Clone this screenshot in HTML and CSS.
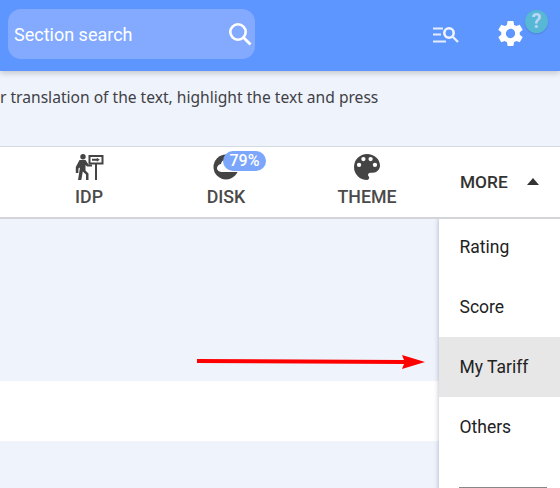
FILE: index.html
```html
<!DOCTYPE html>
<html lang="en">
<head>
<meta charset="utf-8">
<title>Settings</title>
<link rel="stylesheet" href="styles.css">
</head>
<body>
<header class="header">
  <div class="search">
    <span class="search-label">Section search</span>
    <svg class="search-icon" viewBox="0 0 24 24" width="24" height="24"><circle cx="10" cy="10" r="7.700" fill="none" stroke="#fff" stroke-width="2.600"/><path stroke="#fff" stroke-width="2.800" d="M15.500 15.500l7 7"/></svg>
  </div>
  <div class="header-actions">
    <svg class="list-search" viewBox="0 0 27 18" width="27" height="18"><path fill="none" stroke="#e4edff" stroke-width="2" d="M1 1.500h10M1 7.500h8M1 14.500h13"/><circle cx="17" cy="6" r="4.700" fill="none" stroke="#f0f5ff" stroke-width="2.600"/><path stroke="#e6eeff" stroke-width="2.400" d="M20.500 9.500l5.500 5.500"/></svg>
    <svg class="gear" viewBox="0 0 24 24" width="31" height="31"><path fill="#fff" d="M19.140 12.940c.04-.3.060-.61.060-.94 0-.32-.02-.64-.07-.94l2.030-1.580c.18-.14.23-.41.120-.61l-1.920-3.320c-.12-.22-.37-.29-.59-.22l-2.390.96c-.5-.38-1.030-.7-1.620-.94l-.36-2.540c-.04-.24-.24-.41-.48-.41h-3.840c-.24 0-.43.170-.47.410l-.36 2.540c-.59.240-1.130.570-1.620.94l-2.390-.96c-.22-.08-.47 0-.59.220L2.740 8.870c-.12.210-.08.470.12.610l2.030 1.580c-.05.3-.09.630-.09.940s.02.640.07.940l-2.030 1.580c-.18.140-.23.410-.12.610l1.920 3.320c.12.220.37.290.59.220l2.390-.96c.5.380 1.030.7 1.620.94l.36 2.540c.05.240.24.410.48.410h3.840c.24 0 .44-.17.47-.41l.36-2.540c.59-.24 1.130-.56 1.620-.94l2.390.96c.22.080.47 0 .59-.22l1.920-3.320c.12-.22.070-.47-.12-.61l-2.010-1.580zM12 15.600c-1.980 0-3.600-1.620-3.600-3.600s1.620-3.600 3.600-3.600 3.600 1.620 3.600 3.600-1.620 3.600-3.600 3.600z"/></svg>
    <span class="help">?</span>
  </div>
</header>
<p class="notice">r translation of the text, highlight the text and press</p>
<nav class="tabs">
  <div class="tab tab-idp">
    <svg viewBox="0 0 30 26" width="30" height="26"><g fill="#444"><circle cx="9" cy="2.800" r="2.700"/><path d="M5.500 6h6l3 4.500h3.500v2h-4.800l-1.700-1.500v5.500l3 3V26H12v-5.500l-3.200-3L7.300 26H4l2-12.500-1.600 1V19H1.800v-6z"/><path d="M14.500 1h15v9.500h-6.500V26h-2V10.500h-6.500zM16.500 3v5.500h11V3z"/><path d="M18 4.800h4.800V3.800L25.800 5.800l-3 2v-1H18z"/></g></svg>
    <span class="tab-label">IDP</span>
  </div>
  <div class="tab tab-disk">
    <svg viewBox="0 0 26 26" width="26" height="26"><circle cx="13" cy="13" r="12.500" fill="#444"/><path fill="#fff" d="M4 15a4.500 4.500 0 0 1 4-5 6 6 0 0 1 10-3h8v11H8a4.500 4.500 0 0 1-4-3z"/></svg>
    <span class="tab-label">DISK</span>
    <span class="badge">79%</span>
  </div>
  <div class="tab tab-theme">
    <svg viewBox="3 3 18 18" width="26" height="26"><path fill="#444" d="M12 3a9 9 0 0 0 0 18c.83 0 1.500-.67 1.500-1.500 0-.39-.15-.74-.39-1.010-.23-.26-.38-.61-.38-.99 0-.83.67-1.500 1.500-1.500H16c2.760 0 5-2.240 5-5 0-4.420-4.030-8-9-8zm-5.500 9a1.500 1.500 0 1 1 0-3 1.500 1.500 0 0 1 0 3zm3-4a1.500 1.500 0 1 1 0-3 1.500 1.500 0 0 1 0 3zm5 0a1.500 1.500 0 1 1 0-3 1.500 1.500 0 0 1 0 3zm3 4a1.500 1.500 0 1 1 0-3 1.500 1.500 0 0 1 0 3z"/></svg>
    <span class="tab-label">THEME</span>
  </div>
  <div class="more">
    <span class="more-label">MORE</span>
    <span class="caret"></span>
  </div>
</nav>
<main class="content">
  <div class="band"></div>
  <svg class="arrow" viewBox="0 0 228 14" width="228" height="14"><path fill="#f00" d="M0 4l207 1L205 0l23 7-23 7 2-5L0 8z"/></svg>
  <ul class="menu">
    <li class="menu-item">Rating</li>
    <li class="menu-item">Score</li>
    <li class="menu-item is-active">My Tariff</li>
    <li class="menu-item">Others</li>
    <li class="menu-rule"></li>
  </ul>
</main>
</body>
</html>
```
FILE: styles.css
```css
* { box-sizing: border-box; }
html, body { margin: 0; padding: 0; }
body {
  width: 560px;
  height: 488px;
  overflow: hidden;
  background: #eff3fb;
  font-family: Roboto, "Liberation Sans", sans-serif;
  display: flex;
  flex-direction: column;
}
.header {
  height: 71px;
  flex: none;
  background: #5e96ff;
  padding: 9px 0 12px 8px;
  display: flex;
  justify-content: space-between;
  position: relative;
  box-shadow: 0 2px 6px rgba(0, 0, 0, .2);
}
.search {
  width: 247px;
  height: 50px;
  background: #83aaff;
  border-radius: 13px;
  padding: 0 3px 0 6px;
  display: flex;
  align-items: center;
  justify-content: space-between;
  color: #fff;
  font-size: 18px;
}
.search-icon { flex: none; }
.header-actions {
  position: relative;
  width: 128px;
  display: flex;
  align-items: flex-start;
}
.list-search { margin: 18px 36px 0 0; flex: none; }
.gear { margin-top: 9px; flex: none; }
.help {
  position: absolute;
  left: 93px;
  top: 1px;
  width: 23px;
  height: 23px;
  border-radius: 50%;
  background: #56b8d4;
  color: #bcd6f6;
  font-size: 20px;
  font-weight: 700;
  line-height: 23px;
  text-align: center;
  box-shadow: 0 1px 2px rgba(0, 0, 0, .15);
}
.notice {
  margin: 0;
  height: 75px;
  flex: none;
  padding: 15px 0 0 0;
  font-family: "Noto Sans", sans-serif;
  font-size: 15.600px;
  line-height: 22px;
  color: #3f4146;
}
.tabs {
  height: 73px;
  flex: none;
  background: #fff;
  border-top: 1px solid #d5d9e0;
  border-bottom: 2px solid #d2d4d9;
  position: relative;
  display: flex;
}
.tab {
  display: flex;
  flex-direction: column;
  align-items: center;
  position: relative;
  color: #4a4a4a;
  padding-top: 7px;
  flex: none;
}
.tab-idp { width: 60px; margin-left: 59px; }
.tab-disk { width: 60px; margin-left: 77px; }
.tab-theme { width: 80px; margin-left: 71px; }
.tab-label {
  font-size: 17.800px;
  line-height: 20px;
  font-weight: 500;
  margin-top: 7px;
}
.badge {
  position: absolute;
  left: 27px;
  top: 4px;
  width: 43px;
  height: 20px;
  border-radius: 10px;
  background: #7ba6fb;
  color: #fff;
  font-size: 16px;
  font-weight: 500;
  line-height: 20px;
  text-align: center;
}
.more {
  margin-left: 53px;
  display: flex;
  align-items: center;
  color: #333;
  font-size: 17.300px;
  font-weight: 500;
  padding-bottom: 1px;
}
.caret {
  margin-left: 19px;
  width: 0;
  height: 0;
  border-left: 6px solid transparent;
  border-right: 6px solid transparent;
  border-bottom: 7px solid #333;
}
.content { flex: 1; position: relative; overflow: hidden; }
.band {
  margin-top: 162px;
  height: 60px;
  background: #fff;
}
.arrow { position: absolute; left: 197px; top: 136px; }
.menu {
  position: absolute;
  top: -2px;
  left: 439px;
  width: 121px;
  height: 300px;
  margin: 0;
  padding: 0;
  list-style: none;
  background: #fff;
  border-radius: 4px 0 0 0;
  box-shadow: 0 0 5px rgba(40, 50, 90, .35);
}
.menu-item {
  height: 60px;
  padding: 0 0 1px 20.500px;
  display: flex;
  align-items: center;
  font-size: 17.500px;
  color: #222;
}
.is-active { background: #e7e7e7; }
.menu-rule {
  margin: 30px 0 0 20px;
  width: 88px;
  border-top: 1px solid #888;
}
```
